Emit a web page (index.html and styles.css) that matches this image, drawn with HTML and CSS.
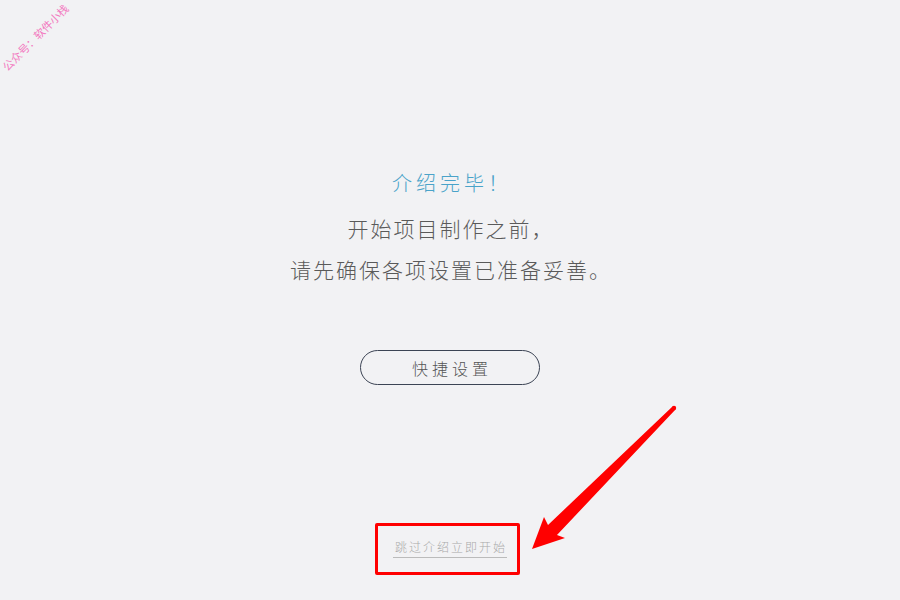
FILE: index.html
```html
<!DOCTYPE html>
<html lang="zh-CN">
<head>
    <meta charset="UTF-8">
    <meta name="viewport" content="width=device-width, initial-scale=1.0">
    <title>介绍完毕</title>
    <link rel="stylesheet" href="styles.css">
</head>
<body>
    <div class="watermark">公众号：软件小栈</div>

    <div class="page">
        <h1 class="title">介绍完毕！</h1>
        <p class="message">开始项目制作之前，<br>请先确保各项设置已准备妥善。</p>
        <button class="quick-btn">快捷设置</button>
        <a class="skip-link" href="#">跳过介绍立即开始</a>
    </div>

    <div class="mark-box"></div>
    <svg class="mark-arrow" width="160" height="160" viewBox="525 400 160 160">
        <circle cx="674" cy="408" r="2.2" fill="#ff0000"/>
        <polygon points="672.5,406.5 548,525 544,517 532,549 565,538 557,535 675.5,409.5" fill="#ff0000"/>
    </svg>
</body>
</html>
```

FILE: styles.css
```css
body {
    margin: 0;
    height: 600px;
    background-color: #f2f2f4;
    font-family: "Noto Sans CJK SC", "Noto Sans", sans-serif;
    color: #5a5a5a;
    overflow: hidden;
}
.page {
    display: flex;
    flex-direction: column;
    align-items: center;
    padding-top: 170px;
}
.title {
    margin: 0;
    font-size: 20px;
    line-height: 26px;
    font-weight: 300;
    letter-spacing: 4px;
    color: #4aa3c9;
    padding-left: 4px;
}
.message {
    margin: 12px 0 0;
    font-size: 21px;
    line-height: 41px;
    font-weight: 300;
    letter-spacing: 2px;
    text-align: center;
    padding-left: 2px;
}
.quick-btn {
    margin-top: 60px;
    width: 180px;
    height: 35px;
    border: 1px solid #3c4454;
    border-radius: 18px;
    background: transparent;
    font-family: inherit;
    font-size: 16px;
    font-weight: 300;
    letter-spacing: 4px;
    padding: 0 0 0 4px;
    color: #555;
    cursor: pointer;
}
.skip-link {
    margin-top: 152px;
    font-size: 12px;
    line-height: 20px;
    font-weight: 300;
    letter-spacing: 2px;
    color: #aaa;
    text-decoration: none;
    padding: 0 0 0 2px;
    border-bottom: 1px solid #bbb;
}
.watermark {
    position: absolute;
    left: -9px;
    top: 29px;
    font-size: 11px;
    color: #f27ac0;
    transform: rotate(-45deg);
    white-space: nowrap;
}
.mark-box {
    position: absolute;
    left: 375px;
    top: 523px;
    width: 139px;
    height: 46px;
    border: 3px solid #ff0000;
    border-radius: 2px;
}
.mark-arrow {
    position: absolute;
    left: 525px;
    top: 400px;
}
```
